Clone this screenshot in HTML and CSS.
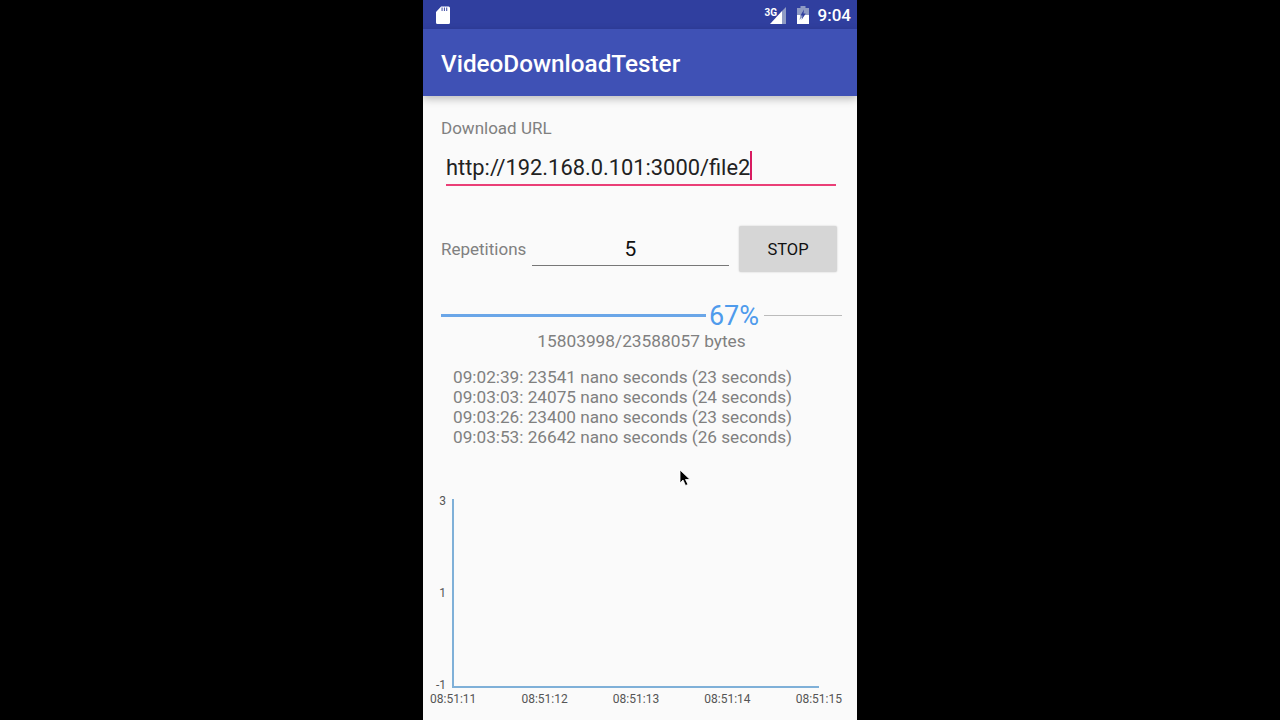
FILE: index.html
```html
<!DOCTYPE html>
<html lang="en">
<head>
    <meta charset="UTF-8">
    <meta name="viewport" content="width=device-width, initial-scale=1.0">
    <title>VideoDownloadTester</title>
    <link rel="stylesheet" href="styles.css">
</head>
<body>
    <div class="phone">
        <div class="status-bar">
            <svg class="sd-icon" width="14" height="18" viewBox="0.5 0 15 18" preserveAspectRatio="none">
                <path d="M6 0.500h8a1.500 1.500 0 0 1 1.500 1.500v14.500a1.500 1.500 0 0 1-1.500 1.500H2a1.500 1.500 0 0 1-1.500-1.500V6z" fill="#fff"/>
                <path d="M7 1.500v3.500M9.500 1.500v3.500M12 1.500v3.500" stroke="#303f9f" stroke-width="1"/>
            </svg>
            <div class="status-right">
                <span class="net-label">3G</span>
                <svg class="signal-icon" width="16" height="17" viewBox="0 0 16 17">
                    <path d="M12 4v13H0z" fill="#fff"/>
                    <path d="M12 4l4-4v17h-4z" fill="#8f9bc4"/>
                </svg>
                <svg class="battery-icon" width="12" height="18" viewBox="0 0 12 18">
                    <path d="M3.500 0h5v2H12v16H0V2h3.500z" fill="#8f9bc4"/>
                    <path d="M0 9h3.500L2.500 14 7.500 9H12v9H0z" fill="#fff"/>
                    <path d="M7 3.500L3.500 9.500h2.200L4.500 14l4.200-6.500H6.500z" fill="#303f9f"/>
                </svg>
                <span class="clock">9:04</span>
            </div>
        </div>
        <header class="app-bar">VideoDownloadTester</header>

        <main class="content">
            <label class="url-label">Download URL</label>
            <div class="url-field">http://192.168.0.101:3000/file2<span class="caret"></span></div>

            <div class="repeat-row">
                <span class="repeat-label">Repetitions</span>
                <div class="repeat-field">5</div>
                <button class="stop-btn" type="button">STOP</button>
            </div>

            <div class="progress-row">
                <div class="progress-done"></div>
                <span class="progress-pct">67%</span>
                <div class="progress-left"></div>
            </div>
            <div class="progress-bytes">15803998/23588057 bytes</div>

            <div class="log">
                <div>09:02:39: 23541 nano seconds (23 seconds)</div>
                <div>09:03:03: 24075 nano seconds (24 seconds)</div>
                <div>09:03:26: 23400 nano seconds (23 seconds)</div>
                <div>09:03:53: 26642 nano seconds (26 seconds)</div>
            </div>

            <div class="chart">
                <div class="y-axis">
                    <span>3</span>
                    <span>1</span>
                    <span>-1</span>
                </div>
                <div class="plot"></div>
                <div class="x-axis">
                    <span>08:51:11</span>
                    <span>08:51:12</span>
                    <span>08:51:13</span>
                    <span>08:51:14</span>
                    <span>08:51:15</span>
                </div>
            </div>
        </main>

        <svg class="cursor" width="12" height="18" viewBox="0 0 12 18">
            <path d="M1 1v13l3-3 2.500 5.500 2.500-1L6.500 10.500H11z" fill="#000" stroke="#fff" stroke-width="0.800"/>
        </svg>
    </div>
</body>
</html>
```

FILE: styles.css
```css
html, body {
    margin: 0;
    padding: 0;
    height: 720px;
    overflow: hidden;
    background-color: #000;
    font-family: Roboto, "Liberation Sans", sans-serif;
}
.phone {
    position: relative;
    width: 434px;
    height: 720px;
    margin: 0 auto;
    background-color: #fafafa;
    overflow: hidden;
}
.status-bar {
    display: flex;
    align-items: center;
    justify-content: space-between;
    height: 29px;
    padding: 0 6px 0 13px;
    background-color: #303f9f;
    box-sizing: border-box;
}
.status-right {
    position: relative;
    display: flex;
    align-items: center;
}
.signal-icon {
    margin-right: 11px;
    margin-top: 1px;
}
.net-label {
    position: absolute;
    left: -5px;
    top: 2px;
    font-size: 10px;
    line-height: 11px;
    font-weight: 700;
    color: #fff;
}
.battery-icon {
    margin-right: 9px;
}
.clock {
    color: #fff;
    font-size: 17px;
    font-weight: 500;
}
.app-bar {
    height: 67px;
    padding: 0 18px;
    line-height: 70px;
    background-color: #3f51b5;
    color: #fff;
    font-size: 24.300px;
    font-weight: 500;
    box-shadow: 0 3px 8px rgba(0,0,0,0.25);
    position: relative;
}
.content {
    display: flex;
    flex-direction: column;
    padding: 0 16px 0 18px;
}
.url-label {
    margin-top: 22px;
    height: 20px;
    line-height: 20px;
    font-size: 17px;
    color: #808080;
}
.url-field {
    display: flex;
    align-items: center;
    height: 33px;
    padding-top: 4px;
    width: 390px;
    margin: 9px 0 0 5px;
    border-bottom: 2px solid #ea3f77;
    font-size: 21.850px;
    color: #222;
}
.caret {
    width: 2px;
    height: 29px;
    margin-top: -4px;
    background-color: #d81b60;
}
.repeat-row {
    display: flex;
    align-items: center;
    height: 48px;
    margin-top: 39px;
}
.repeat-label {
    width: 91px;
    font-size: 17px;
    color: #808080;
}
.repeat-field {
    align-self: flex-start;
    width: 197px;
    height: 35px;
    padding-top: 5px;
    line-height: 38px;
    border-bottom: 1px solid #777;
    text-align: center;
    font-size: 21px;
    color: #111;
}
.stop-btn {
    width: 98px;
    height: 46px;
    margin-left: 10px;
    border: none;
    border-radius: 2px;
    background-color: #d6d6d6;
    box-shadow: 0 0 2px rgba(0,0,0,0.2);
    font-family: inherit;
    font-size: 16.500px;
    font-weight: 400;
    color: #111;
}
.progress-row {
    display: flex;
    align-items: center;
    height: 30px;
    width: 401px;
    margin-top: 27px;
}
.progress-done {
    width: 265px;
    height: 3px;
    background-color: #6aa6e8;
}
.progress-pct {
    width: 58px;
    margin: 2px 1px 0 -1px;
    text-align: center;
    font-size: 27px;
    color: #4f9bec;
}
.progress-left {
    flex: 1;
    height: 1px;
    background-color: #bbb;
}
.progress-bytes {
    width: 401px;
    height: 23px;
    line-height: 23px;
    text-align: center;
    font-size: 17.300px;
    color: #808080;
}
.log {
    margin: 14px 0 0 12px;
    font-size: 17.200px;
    line-height: 20px;
    color: #808080;
}
.chart {
    position: relative;
    height: 251px;
    margin-top: 45px;
}
.y-axis {
    position: absolute;
    left: -19px;
    top: 4px;
    width: 24px;
    height: 195px;
    display: flex;
    flex-direction: column;
    justify-content: space-between;
    text-align: right;
    font-size: 12px;
    line-height: 11px;
    color: #555;
}
.plot {
    position: absolute;
    left: 11px;
    top: 7px;
    width: 365px;
    height: 187px;
    border-left: 2px solid #7fb0d8;
    border-bottom: 2px solid #7fb0d8;
}
.x-axis {
    position: absolute;
    left: -11px;
    top: 201px;
    width: 412px;
    display: flex;
    justify-content: space-between;
    font-size: 12px;
    line-height: 12px;
    color: #555;
}
.cursor {
    position: absolute;
    left: 256px;
    top: 469px;
}
```
